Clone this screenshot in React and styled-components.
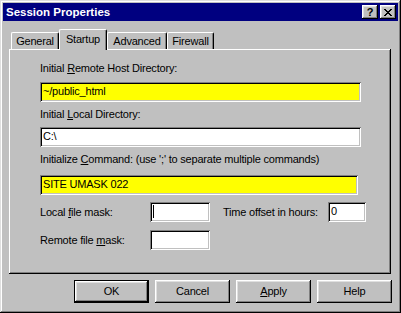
import styled, { createGlobalStyle } from 'styled-components'

const GlobalStyle = createGlobalStyle`
  html, body {
    margin: 0;
    padding: 0;
    background: #c0c0c0;
  }
  body {
    font-family: "Liberation Sans", Arial, sans-serif;
    font-size: 11px;
  }
`

const Dialog = styled.div`
  box-sizing: border-box;
  width: 401px;
  height: 313px;
  padding: 3px;
  display: flex;
  flex-direction: column;
  background: #c0c0c0;
  color: #000;
  letter-spacing: -0.2px;
  box-shadow: inset -1px -1px #000, inset 1px 1px #dfdfdf, inset -2px -2px #808080, inset 2px 2px #fff;
`

const TitleBar = styled.div`
  height: 18px;
  flex: none;
  display: flex;
  align-items: center;
  padding: 0 2px 0 3px;
  background: #000080;
`

const Title = styled.span`
  flex: 1;
  color: #fff;
  font-weight: bold;
  font-size: 11.5px;
  letter-spacing: 0;
`

const CaptionButton = styled.div`
  box-sizing: border-box;
  width: 16px;
  height: 14px;
  margin-left: ${p => p.$gap || 0}px;
  display: flex;
  align-items: center;
  justify-content: center;
  background: #c0c0c0;
  font-weight: bold;
  font-size: 11px;
  line-height: 14px;
  box-shadow: inset -1px -1px #000, inset 1px 1px #fff, inset -2px -2px #808080, inset 2px 2px #dfdfdf;
`

const Body = styled.div`
  flex: 1;
  display: flex;
  flex-direction: column;
  padding: 8px 6px 0 6px;
`

const TabStrip = styled.div`
  height: 20px;
  display: flex;
  align-items: flex-end;
  padding-left: 2px;
`

const Tab = styled.div`
  box-sizing: border-box;
  width: ${p => p.$w}px;
  height: ${p => (p.$active ? 21 : 17)}px;
  margin-bottom: ${p => (p.$active ? -1 : 0)}px;
  padding-bottom: ${p => (p.$active ? 3 : 1)}px;
  position: relative;
  z-index: ${p => (p.$active ? 1 : 0)};
  display: flex;
  align-items: center;
  justify-content: center;
  background: #c0c0c0;
  border: 1px solid #fff;
  border-right-color: #000;
  border-bottom: none;
  border-radius: 2px 2px 0 0;
  box-shadow: inset -1px 0 #808080;
`

const Panel = styled.div`
  box-sizing: border-box;
  height: 225px;
  margin-right: 1px;
  padding: 13px 30px 0 31px;
  box-shadow: inset -1px -1px #000, inset 1px 1px #fff, inset -2px -2px #808080;
`

const Label = styled.div`
  line-height: 13px;
  margin-top: ${p => p.$mt || 0}px;
  white-space: nowrap;
`

const Edit = styled.div`
  box-sizing: border-box;
  flex: none;
  height: 20px;
  width: ${p => (p.$w ? `${p.$w}px` : 'auto')};
  margin-top: ${p => p.$mt || 0}px;
  margin-right: ${p => p.$mr || 0}px;
  padding: 0 3px;
  line-height: 18px;
  white-space: nowrap;
  background: ${p => (p.$hl ? '#ffff00' : '#fff')};
  box-shadow: inset 1px 1px #808080, inset -1px -1px #fff, inset 2px 2px #000, inset -2px -2px #c0c0c0;
`

const Caret = styled.span`
  display: inline-block;
  width: 1px;
  height: 13px;
  background: #000;
  vertical-align: -3px;
`

const MaskRow = styled.div`
  display: flex;
  align-items: center;
  margin-top: ${p => p.$mt || 0}px;
`

const RowLabel = styled.span`
  flex: none;
  width: ${p => p.$w}px;
  margin-left: ${p => p.$ml || 0}px;
  white-space: nowrap;
`

const ButtonRow = styled.div`
  display: flex;
  justify-content: flex-end;
  gap: 6px;
  margin-top: 6px;
`

const PushButton = styled.div`
  box-sizing: border-box;
  width: 75px;
  height: 23px;
  padding-bottom: 2px;
  display: flex;
  align-items: center;
  justify-content: center;
  box-shadow: ${p =>
    p.$default
      ? 'inset 0 0 0 1px #000, inset -2px -2px #000, inset 2px 2px #fff, inset -3px -3px #808080, inset 3px 3px #dfdfdf'
      : 'inset -1px -1px #000, inset 1px 1px #fff, inset -2px -2px #808080, inset 2px 2px #dfdfdf'};
`

// 8x7 pixel close glyph
const closeRows = ['11000011', '01100110', '00111100', '00011000', '00111100', '01100110', '11000011']

const CloseGlyph = () => (
  <svg width="8" height="7" viewBox="0 0 8 7" shapeRendering="crispEdges">
    {closeRows.map((row, y) =>
      row.split('').map((c, x) => (c === '1' ? <rect key={`${x}-${y}`} x={x} y={y} width="1" height="1" fill="#000" /> : null))
    )}
  </svg>
)

export default function App() {
  return (
    <>
      <GlobalStyle />
      <Dialog>
        <TitleBar>
          <Title>Session Properties</Title>
          <CaptionButton>?</CaptionButton>
          <CaptionButton $gap={2}>
            <CloseGlyph />
          </CaptionButton>
        </TitleBar>
        <Body>
          <TabStrip>
            <Tab $w={48}>General</Tab>
            <Tab $w={48} $active>Startup</Tab>
            <Tab $w={60}>Advanced</Tab>
            <Tab $w={47}>Firewall</Tab>
          </TabStrip>
          <Panel>
            <Label>
              Initial <u>R</u>emote Host Directory:
            </Label>
            <Edit $hl $mt={7}>~/public_html</Edit>
            <Label $mt={6}>
              Initial <u>L</u>ocal Directory:
            </Label>
            <Edit $mt={6}>C:\</Edit>
            <Label $mt={6}>
              Initialize <u>C</u>ommand: (use ';' to separate multiple commands)
            </Label>
            <Edit $hl $mt={9} $mr={3}>SITE UMASK 022</Edit>
            <MaskRow $mt={7}>
              <RowLabel $w={110}>
                Local <u>f</u>ile mask:
              </RowLabel>
              <Edit $w={60}>
                <Caret />
              </Edit>
              <RowLabel $w={105} $ml={13}>
                Time offset in hours:
              </RowLabel>
              <Edit $w={38}>0</Edit>
            </MaskRow>
            <MaskRow $mt={8}>
              <RowLabel $w={110}>
                Remote file <u>m</u>ask:
              </RowLabel>
              <Edit $w={60} />
            </MaskRow>
          </Panel>
          <ButtonRow>
            <PushButton $default>OK</PushButton>
            <PushButton>Cancel</PushButton>
            <PushButton>
              <u>A</u>pply
            </PushButton>
            <PushButton>Help</PushButton>
          </ButtonRow>
        </Body>
      </Dialog>
    </>
  )
}
